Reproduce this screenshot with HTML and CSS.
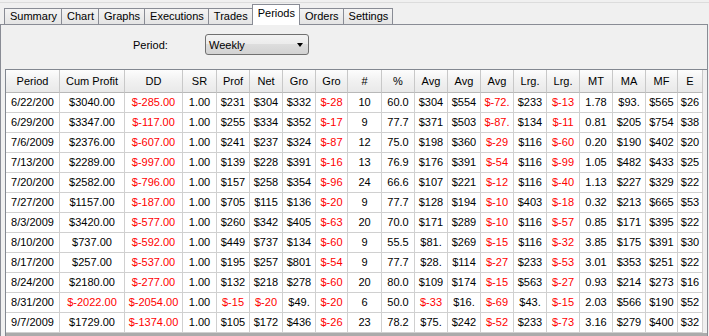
FILE: index.html
```html
<!DOCTYPE html>
<html lang="en">
<head>
    <meta charset="UTF-8">
    <title>Periods</title>
    <link rel="stylesheet" href="styles.css">
</head>
<body>
    <div class="top-line"></div>
    <div class="tabs">
        <div class="tab">Summary</div>
        <div class="tab">Chart</div>
        <div class="tab">Graphs</div>
        <div class="tab">Executions</div>
        <div class="tab">Trades</div>
        <div class="tab active">Periods</div>
        <div class="tab">Orders</div>
        <div class="tab">Settings</div>
    </div>

    <div class="page">
        <div class="filter">
            <span class="filter-label">Period:</span>
            <div class="select">
                <span>Weekly</span>
                <span class="arrow"></span>
            </div>
        </div>

        <div class="grid">
            <div class="row head">
                <div class="cell">Period</div>
                <div class="cell">Cum Profit</div>
                <div class="cell">DD</div>
                <div class="cell">SR</div>
                <div class="cell">Prof</div>
                <div class="cell">Net</div>
                <div class="cell">Gro</div>
                <div class="cell">Gro</div>
                <div class="cell">#</div>
                <div class="cell">%</div>
                <div class="cell">Avg</div>
                <div class="cell">Avg</div>
                <div class="cell">Avg</div>
                <div class="cell">Lrg.</div>
                <div class="cell">Lrg.</div>
                <div class="cell">MT</div>
                <div class="cell">MA</div>
                <div class="cell">MF</div>
                <div class="cell">E</div>
            </div>
            <div id="rows"></div>
        </div>
    </div>

    <script>
        const periods = [
            ['6/22/200', '$3040.00', '$-285.00', '1.00', '$231', '$304', '$332', '$-28', '10', '60.0', '$304', '$554', '$-72.', '$233', '$-13', '1.78', '$93.', '$565', '$26'],
            ['6/29/200', '$3347.00', '$-117.00', '1.00', '$255', '$334', '$352', '$-17', '9', '77.7', '$371', '$503', '$-87.', '$134', '$-11', '0.81', '$205', '$754', '$38'],
            ['7/6/2009', '$2376.00', '$-607.00', '1.00', '$241', '$237', '$324', '$-87', '12', '75.0', '$198', '$360', '$-29', '$116', '$-60', '0.20', '$190', '$402', '$20'],
            ['7/13/200', '$2289.00', '$-997.00', '1.00', '$139', '$228', '$391', '$-16', '13', '76.9', '$176', '$391', '$-54', '$116', '$-99', '1.05', '$482', '$433', '$25'],
            ['7/20/200', '$2582.00', '$-796.00', '1.00', '$157', '$258', '$354', '$-96', '24', '66.6', '$107', '$221', '$-12', '$116', '$-40', '1.13', '$227', '$329', '$22'],
            ['7/27/200', '$1157.00', '$-187.00', '1.00', '$705', '$115', '$136', '$-20', '9', '77.7', '$128', '$194', '$-10', '$403', '$-18', '0.32', '$213', '$665', '$53'],
            ['8/3/2009', '$3420.00', '$-577.00', '1.00', '$260', '$342', '$405', '$-63', '20', '70.0', '$171', '$289', '$-10', '$116', '$-57', '0.85', '$171', '$395', '$22'],
            ['8/10/200', '$737.00', '$-592.00', '1.00', '$449', '$737', '$134', '$-60', '9', '55.5', '$81.', '$269', '$-15', '$116', '$-32', '3.85', '$175', '$391', '$30'],
            ['8/17/200', '$257.00', '$-537.00', '1.00', '$195', '$257', '$801', '$-54', '9', '77.7', '$28.', '$114', '$-27', '$233', '$-53', '3.01', '$353', '$251', '$22'],
            ['8/24/200', '$2180.00', '$-277.00', '1.00', '$132', '$218', '$278', '$-60', '20', '80.0', '$109', '$174', '$-15', '$563', '$-27', '0.93', '$214', '$273', '$16'],
            ['8/31/200', '$-2022.00', '$-2054.00', '1.00', '$-15', '$-20', '$49.', '$-20', '6', '50.0', '$-33', '$16.', '$-69', '$43.', '$-15', '2.03', '$566', '$190', '$52'],
            ['9/7/2009', '$1729.00', '$-1374.00', '1.00', '$105', '$172', '$436', '$-26', '23', '78.2', '$75.', '$242', '$-52', '$233', '$-73', '3.16', '$279', '$400', '$32']
        ];

        const rows = document.getElementById('rows');
        periods.forEach(values => {
            const row = document.createElement('div');
            row.className = 'row';
            values.forEach(value => {
                const cell = document.createElement('div');
                cell.className = value.startsWith('$-') ? 'cell negative' : 'cell';
                cell.textContent = value;
                row.appendChild(cell);
            });
            rows.appendChild(row);
        });
    </script>
</body>
</html>
```

FILE: styles.css
```css
* {
    margin: 0;
    padding: 0;
    box-sizing: border-box;
}

body {
    font-family: 'Liberation Sans', Arial, sans-serif;
    font-size: 11px;
    background-color: #f0f0f0;
    color: #000;
    width: 709px;
    height: 336px;
    overflow: hidden;
}

.top-line {
    height: 3px;
    border-bottom: 1px solid #dcdcdc;
}

.tabs {
    display: flex;
    align-items: flex-end;
    height: 21px;
    padding-left: 4px;
}

.tab {
    height: 16px;
    line-height: 14px;
    padding: 0 4px 0 5px;
    border: 1px solid #898c95;
    border-bottom: none;
    margin-right: -1px;
    background: linear-gradient(#f4f4f4, #e4e4e4);
    white-space: nowrap;
}

.tab.active {
    height: 21px;
    line-height: 16px;
    margin-bottom: -1px;
    background: #ffffff;
    position: relative;
    z-index: 1;
}

.page {
    width: 708px;
    height: 312px;
    border: 1px solid #898c95;
    border-bottom: none;
    overflow: hidden;
}

.filter {
    height: 44px;
    display: flex;
    align-items: flex-start;
    padding: 9px 0 0 132px;
}

.filter-label {
    width: 72px;
    line-height: 22px;
}

.select {
    width: 104px;
    height: 21px;
    border: 1px solid #707070;
    border-radius: 3px;
    background: linear-gradient(#f3f3f3, #ebebeb 50%, #dddddd 50%, #d2d2d2);
    display: flex;
    align-items: center;
    justify-content: space-between;
    padding: 0 5px 0 3px;
}

.arrow {
    width: 0;
    height: 0;
    border-top: 4px solid #000;
    border-left: 3.5px solid transparent;
    border-right: 3.5px solid transparent;
}

.grid {
    margin-left: 4px;
    height: 100%;
    border-left: 1px solid #828790;
    border-top: 1px solid #828790;
    background-color: #ababab;
}

.row {
    display: grid;
    grid-template-columns: 54px 65px 58px 34px 33px 33px 33px 32px 34px repeat(8, 33px) 32px 25px;
    background-color: #f0f0f0;
}

.cell {
    height: 20px;
    line-height: 19px;
    text-align: center;
    white-space: nowrap;
    overflow: hidden;
    background-color: #ffffff;
    border-right: 1px solid #d0d0d0;
    border-bottom: 1px solid #d0d0d0;
}

.head .cell {
    height: 23px;
    line-height: 22px;
    background: linear-gradient(#fdfdfd, #f1f1f1 50%, #e9e9e9);
    border-right: 1px solid #c8c8c8;
    border-bottom: 1px solid #b8b8b8;
}

.negative {
    color: #ff0000;
}
```
